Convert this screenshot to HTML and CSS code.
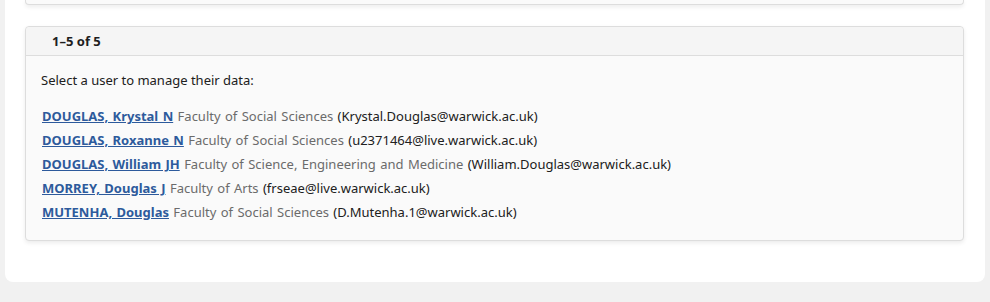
FILE: index.html
```html
<!DOCTYPE html>
<html lang="en">
<head>
    <meta charset="UTF-8">
    <title>Manage user data</title>
    <link rel="stylesheet" href="styles.css">
</head>
<body>
    <div class="page">
        <div class="panel panel-top"></div>

        <div class="panel">
            <div class="panel-heading">1–5 of 5</div>
            <div class="panel-body">
                <p>Select a user to manage their data:</p>
                <ul class="user-list">
                    <li><a href="#">DOUGLAS, Krystal N</a> <span class="dept">Faculty of Social Sciences</span> (Krystal.Douglas@warwick.ac.uk)</li>
                    <li><a href="#">DOUGLAS, Roxanne N</a> <span class="dept">Faculty of Social Sciences</span> (u2371464@live.warwick.ac.uk)</li>
                    <li><a href="#">DOUGLAS, William JH</a> <span class="dept">Faculty of Science, Engineering and Medicine</span> (William.Douglas@warwick.ac.uk)</li>
                    <li><a href="#">MORREY, Douglas J</a> <span class="dept">Faculty of Arts</span> (frseae@live.warwick.ac.uk)</li>
                    <li><a href="#">MUTENHA, Douglas</a> <span class="dept">Faculty of Social Sciences</span> (D.Mutenha.1@warwick.ac.uk)</li>
                </ul>
            </div>
        </div>
    </div>
</body>
</html>
```

FILE: styles.css
```css
body {
    margin: 0;
    background: #f1f1f1;
    font-family: "Noto Sans", Lato, sans-serif;
    font-size: 13px;
    color: #202020;
}

.page {
    margin: 0 5px;
    padding: 0 21px 41px 20px;
    background: #fff;
    border-radius: 0 0 8px 8px;
}

.panel {
    background: #fafafa;
    border: 1px solid #ddd;
    border-radius: 4px;
    box-shadow: 0 2px 4px rgba(0, 0, 0, 0.08);
}

.panel-top {
    height: 4px;
    border-top: none;
    border-radius: 0 0 4px 4px;
    margin-bottom: 21px;
}

.panel-heading {
    height: 28px;
    line-height: 28px;
    padding-left: 26px;
    background: #f5f5f5;
    border-bottom: 1px solid #ddd;
    border-radius: 4px 4px 0 0;
    font-weight: bold;
    color: #1e1e1e;
}

.panel-body {
    padding: 12px 15px 16px;
}

.panel-body p {
    margin: 0 0 12px;
    line-height: 24px;
}

.user-list {
    list-style: none;
    margin: 0;
    padding: 0 0 0 1px;
}

.user-list li {
    line-height: 24px;
    word-spacing: 1px;
}

.user-list a {
    color: #2d5a9c;
    font-weight: bold;
}

.dept {
    color: #6b6b6b;
}
```
